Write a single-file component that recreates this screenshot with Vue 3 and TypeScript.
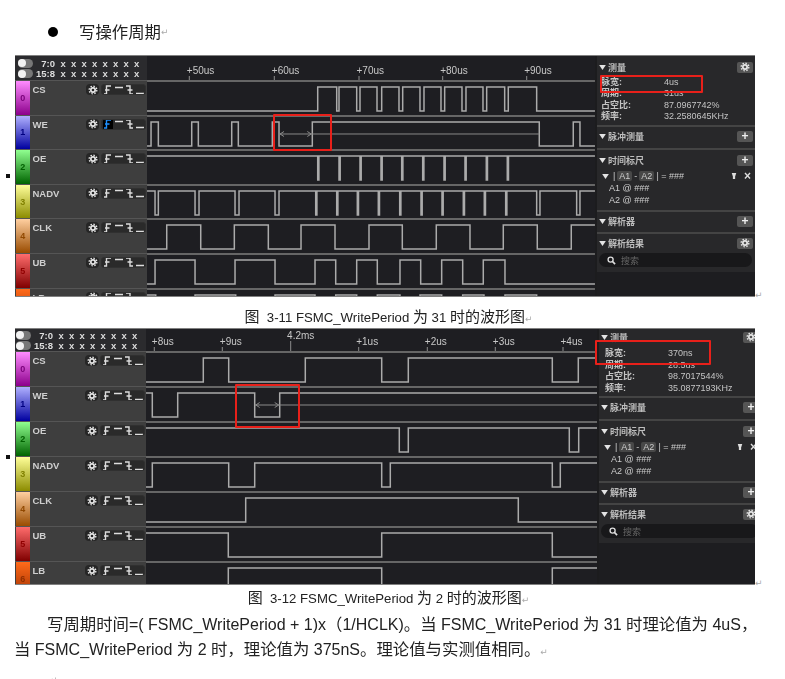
<template>
  <div class="page">
    <svg class="defs" aria-hidden="true">
      <symbol id="gear" viewBox="0 0 12 12">
        <circle cx="6" cy="6" r="2.6" fill="none" stroke="#e8e8e8" stroke-width="2" />
        <circle cx="6" cy="6" r="4.6" fill="none" stroke="#e8e8e8" stroke-width="1.6" stroke-dasharray="1.8 1.8" />
      </symbol>
      <symbol id="pin" viewBox="0 0 8 10">
        <path d="M1 1h6L5.500 5.500V9H2.500V5.500z" fill="#ddd" />
      </symbol>
      <symbol id="tri" viewBox="0 0 8 6">
        <path d="M0 0h8L4 6z" fill="#e4e4e4" />
      </symbol>
    </svg>

    <div class="heading">
      <span class="bullet"></span>
      <span class="heading-text">写操作周期</span><span class="ret">↵</span>
    </div>

    <template v-for="fig in figures" :key="fig.caption">
      <div class="fig-line">
        <div class="gutter"><span class="mark"></span></div>
        <div class="fig" :class="fig.cls">
          <div class="main">
            <div class="head">
              <div class="head-left">
                <div v-for="b in ['7:0', '15:8']" :key="b" class="bits">
                  <span class="toggle"><i></i></span>
                  <span class="bits-name">{{ b }}</span>
                  <span v-for="n in 8" :key="n" class="bit">x</span>
                </div>
              </div>
              <svg class="ruler" :viewBox="`${fig.left} 0 ${fig.width} ${fig.headH}`" :width="fig.width" :height="fig.headH">
                <g v-for="t in fig.ticks" :key="t.label">
                  <line :x1="t.x" :x2="t.x" :y1="t.big ? 13 : fig.headH - 4" :y2="fig.headH" stroke="#8d8d8d" stroke-width="1" />
                  <text :x="t.big ? t.x + 10 : t.x - 2.5" :y="t.big ? 11 : fig.headH - 6" class="tick-text" :text-anchor="t.big ? 'middle' : 'start'">{{ t.label }}</text>
                </g>
              </svg>
            </div>

            <div v-for="(ch, i) in fig.channels" :key="ch.name" class="row">
              <div class="row-left">
                <div class="tab" :class="`tab-${i}`">{{ i }}</div>
                <div class="row-body">
                  <span class="ch-name">{{ ch.name }}</span>
                  <span class="gear-btn"><svg width="10" height="10"><use href="#gear" /></svg></span>
                  <span class="trig">
                    <span class="trig-item" :class="{ active: ch.name === 'WE' && fig.cls === 'a' }">
                      <svg width="9" height="10" viewBox="0 0 9 10"><path d="M1 9h2.500V1H8M2 5h4.500" fill="none" stroke="currentColor" stroke-width="1.400" /></svg>
                    </span>
                    <svg width="10" height="10" viewBox="0 0 10 10"><path d="M1 2.500h8" stroke="#ddd" stroke-width="1.400" /></svg>
                    <svg width="9" height="10" viewBox="0 0 9 10"><path d="M1 1h4v8h3M2.500 5h5" fill="none" stroke="#ddd" stroke-width="1.400" /></svg>
                    <svg width="10" height="10" viewBox="0 0 10 10"><path d="M1 8.500h8" stroke="#ddd" stroke-width="1.400" /></svg>
                  </span>
                </div>
              </div>
              <svg class="wave" :viewBox="`${fig.left} 0 ${fig.width} ${fig.rowH}`" :width="fig.width" :height="fig.rowH">
                <line :x1="fig.left" :x2="fig.left + fig.width" y1="1" y2="1" stroke="#666" stroke-width="2" />
                <path :d="wavePath(ch, fig)" fill="none" stroke="#ababab" stroke-width="1.500" />
                <g v-if="ch.span" stroke="#8a8a8a" stroke-width="1" fill="none">
                  <line :x1="ch.span[0]" :x2="ch.span[2]" y1="19" y2="19" />
                  <path :d="`M${ch.span[0] + 5} 16.500L${ch.span[0] + 1} 19L${ch.span[0] + 5} 21.500`" />
                  <path :d="`M${ch.span[1] - 5} 16.500L${ch.span[1] - 1} 19L${ch.span[1] - 5} 21.500`" />
                </g>
              </svg>
            </div>
          </div>

          <aside class="side">
            <div class="side-inner">
              <section class="sec first">
                <div class="sec-title"><svg width="7" height="5"><use href="#tri" /></svg>测量<span class="btn"><svg width="10" height="10"><use href="#gear" /></svg></span></div>
                <div class="metrics">
                  <div v-for="m in fig.metrics" :key="m[0]" class="metric"><span class="m-label">{{ m[0] }}</span><span>{{ m[1] }}</span></div>
                </div>
              </section>
              <section class="sec s2">
                <div class="sec-title"><svg width="7" height="5"><use href="#tri" /></svg>脉冲测量<span class="btn plus">+</span></div>
              </section>
              <section class="sec s3">
                <div class="sec-title"><svg width="7" height="5"><use href="#tri" /></svg>时间标尺<span class="btn plus">+</span></div>
                <div class="ruler-rows">
                  <div class="rr">
                    <svg width="7" height="5"><use href="#tri" /></svg>
                    <span>|</span><b>A1</b><span>-</span><b>A2</b><span>| = ###</span>
                    <span class="rr-tools"><svg width="6" height="8"><use href="#pin" /></svg><span class="close">×</span></span>
                  </div>
                  <div class="rr sub">A1 @ ###</div>
                  <div class="rr sub">A2 @ ###</div>
                </div>
              </section>
              <section class="sec s4">
                <div class="sec-title"><svg width="7" height="5"><use href="#tri" /></svg>解析器<span class="btn plus">+</span></div>
              </section>
              <section class="sec last">
                <div class="sec-title"><svg width="7" height="5"><use href="#tri" /></svg>解析结果<span class="btn"><svg width="10" height="10"><use href="#gear" /></svg></span></div>
                <div class="search">
                  <svg width="9" height="9" viewBox="0 0 10 10"><circle cx="4" cy="4" r="2.800" fill="none" stroke="#ddd" stroke-width="1.500" /><path d="M6 6l3 3" stroke="#ddd" stroke-width="1.800" /></svg>
                  <span>搜索</span>
                </div>
              </section>
              <div class="result-area"></div>
            </div>
          </aside>

          <div class="red" :class="`red-a-${fig.cls}`"></div>
          <div class="red" :class="`red-b-${fig.cls}`"></div>
        </div>
        <span class="fig-ret ret">↵</span>
      </div>
      <div class="caption" :class="`cap-${fig.cls}`">
        <span v-for="(r, i) in runs(fig.caption)" :key="i" :class="{ cjk: r.cjk }">{{ r.text }}</span><span class="ret">↵</span>
      </div>
    </template>

    <div class="para">
      <div class="line first-line">
        <span v-for="(r, i) in runs(paraOne)" :key="i" :class="{ cjk: r.cjk }">{{ r.text }}</span>
      </div>
      <div class="line">
        <span v-for="(r, i) in runs(paraTwo)" :key="i" :class="{ cjk: r.cjk }">{{ r.text }}</span><span class="ret">↵</span>
      </div>
      <div class="line end-line"><span class="ret">↵</span></div>
    </div>
  </div>
</template>

<script setup lang="ts">
interface Channel {
  name: string
  high: boolean
  edges: number[]
  span?: [number, number, number]
}

interface Fig {
  cls: string
  caption: string
  left: number
  width: number
  headH: number
  rowH: number
  ticks: { x: number; label: string; big?: boolean }[]
  metrics: [string, string][]
  channels: Channel[]
}

const HIGH_Y = 7
const LOW_Y = 31

const paraOne = '写周期时间=( FSMC_WritePeriod + 1)x（1/HCLK)。当 FSMC_WritePeriod 为 31 时理论值为 4uS，'
const paraTwo = '当 FSMC_WritePeriod 为 2 时，理论值为 375nS。理论值与实测值相同。'

const narrow = (xs: number[], w = 1.2) => xs.flatMap((x) => [x, x + w])

// the document sets latin and chinese at different sizes, so split the text by script
const runs = (text: string) =>
  (text.match(/[\u3000-\u9fff\uff00-\uffef]+|[^\u3000-\u9fff\uff00-\uffef]+/g) ?? []).map((t) => ({
    text: t,
    cjk: /[\u3000-\u9fff\uff00-\uffef]/.test(t),
  }))

const figures: Fig[] = [
  {
    cls: 'a',
    caption: '图\u00a0\u00a03-11 FSMC_WritePeriod 为 31 时的波形图',
    left: 147,
    width: 448,
    headH: 25,
    rowH: 34.6,
    ticks: [
      { x: 189.3, label: '+50us' },
      { x: 274.3, label: '+60us' },
      { x: 359, label: '+70us' },
      { x: 442.7, label: '+80us' },
      { x: 526.7, label: '+90us' },
    ],
    metrics: [
      ['脉宽:', '4us'],
      ['周期:', '31us'],
      ['占空比:', '87.0967742%'],
      ['频率:', '32.2580645KHz'],
    ],
    channels: [
      { name: 'CS', high: false, edges: [317.7, 336.7, 339, 356.7, 360, 377, 381.7, 399, 402.7, 420, 424, 441, 444.7, 462, 466, 483, 486.7, 504.7, 508.3, 536.7] },
      { name: 'WE', high: false, edges: [151, 158.3, 191.7, 198.3, 231.7, 238.3, 272.3, 279, 312.3, 539.3, 573.3, 580], span: [279, 312.3, 539.3] },
      { name: 'OE', high: true, edges: narrow([317.7, 339, 360, 381, 401.7, 422.7, 444, 465, 486.3, 507.3]) },
      { name: 'NADV', high: true, edges: [155, 158.3, 195, 199, 235, 239, 275, 279, ...narrow([315.7, 336.7, 357.3, 378.3, 399.7, 421, 442, 463.3, 484.3, 505.7]), 536.7, 540, 576.7, 580] },
      { name: 'CLK', high: false, edges: [166.7, 200.7, 234.3, 268.3, 301, 335, 369, 402.3, 436.3, 470, 503.3, 537.3, 571.3] },
      { name: 'UB', high: false, edges: [155, 195, 235, 275, 315, 335.7, 356.7, 377.3, 400, 420.7, 441.7, 462.7, 483.3, 505] },
      { name: 'LB', high: true, edges: [155.7, 195, 235.7, 275, 315, 335.7, 356.7, 377.3, 400, 420, 441.7, 462.7, 484, 505, 536.7] },
    ],
  },
  {
    cls: 'b',
    caption: '图\u00a0\u00a03-12 FSMC_WritePeriod 为 2 时的波形图',
    left: 146,
    width: 451,
    headH: 23,
    rowH: 35,
    ticks: [
      { x: 154.3, label: '+8us' },
      { x: 222.3, label: '+9us' },
      { x: 290.7, label: '4.2ms', big: true },
      { x: 358.7, label: '+1us' },
      { x: 427.3, label: '+2us' },
      { x: 495.3, label: '+3us' },
      { x: 563, label: '+4us' },
    ],
    metrics: [
      ['脉宽:', '370ns'],
      ['周期:', '28.5us'],
      ['占空比:', '98.7017544%'],
      ['频率:', '35.0877193KHz'],
    ],
    channels: [
      { name: 'CS', high: false, edges: [203.3, 228.7, 305.3, 381.7, 408.3, 552.3, 578.3] },
      { name: 'WE', high: true, edges: [152.3, 177.7, 254.7, 279.7], span: [254.7, 279.7, 597] },
      { name: 'OE', high: true, edges: [399.3, 408.3, 569.3, 578.7] },
      { name: 'NADV', high: false, edges: [152.3, 228.7, 254.7, 381.7, 390.3, 552.3, 560.3] },
      { name: 'CLK', high: false, edges: [245.7, 518.3] },
      { name: 'UB', high: true, edges: [228.3, 381.7, 552.3] },
      { name: 'LB', high: false, edges: [228.3, 381.7, 552.3] },
    ],
  },
]

const wavePath = (ch: Channel, fig: Fig) => {
  let up = ch.high
  let d = `M${fig.left} ${up ? HIGH_Y : LOW_Y}`
  for (const x of ch.edges) {
    up = !up
    d += `H${x}V${up ? HIGH_Y : LOW_Y}`
  }
  return d + `H${fig.left + fig.width}`
}
</script>

<style>
html,
body {
  background: #fff;
}
</style>

<style scoped>
.page {
  width: 785px;
  height: 679px;
  overflow: hidden;
  background: #fff;
  font-family: 'Liberation Sans', 'Noto Sans CJK SC', sans-serif;
  color: #222;
}

.defs {
  position: absolute;
  width: 0;
  height: 0;
}

.heading {
  height: 55px;
  padding: 22px 0 13px 48px;
  box-sizing: border-box;
  display: flex;
  align-items: center;
  font-size: 16.4px;
  line-height: 20px;
  filter: blur(0.3px);
}

.bullet {
  width: 10px;
  height: 10px;
  border-radius: 50%;
  background: #000;
  margin-right: 21px;
}

.ret {
  color: #aaa;
  font-family: 'DejaVu Sans', sans-serif;
  font-size: 9px;
}

.fig-line {
  display: flex;
  align-items: center;
  position: relative;
}

.gutter {
  width: 15px;
  display: flex;
  padding-left: 6px;
  box-sizing: border-box;
}

.mark {
  width: 4px;
  height: 4px;
  background: #111;
}

.fig-ret {
  position: absolute;
  left: 755px;
  bottom: -3px;
}

.fig {
  position: relative;
  display: flex;
  width: 740px;
  overflow: hidden;
  background: #1e1e22;
  color: #ccc;
  filter: blur(0.45px);
}

.fig::after {
  content: '';
  position: absolute;
  inset: 0;
  border-top: 1px solid #808080;
  border-bottom: 1px solid #808080;
}

.fig.a {
  height: 242px;
  --left: 132px;
  --side: 160px;
  --row: 34.6px;
  --head: 25px;
}

.fig.b {
  height: 257px;
  --left: 131px;
  --side: 158px;
  --row: 35px;
  --head: 23px;
}

.main {
  flex: 1;
  min-width: 0;
}

.head {
  display: flex;
  height: var(--head);
}

.head-left {
  width: var(--left);
  flex: none;
  background: #2b2b2e;
  box-sizing: border-box;
  padding-top: 3px;
  font-size: 10px;
  font-weight: 700;
  color: #ddd;
}

.fig.b .head-left {
  padding-top: 2px;
}

.bits {
  display: flex;
  align-items: center;
  height: 10.5px;
}

.toggle {
  width: 15px;
  height: 9px;
  margin: 0 0 0 3px;
  border-radius: 5px;
  background: #777;
  display: flex;
  flex: none;
}

.fig.b .toggle {
  margin-left: 1px;
}

.toggle i {
  width: 8px;
  height: 8px;
  margin-top: 0.5px;
  border-radius: 50%;
  background: #f2f2f2;
}

.bits-name {
  width: 22px;
  flex: none;
  text-align: right;
  font-size: 9.5px;
}

.bit {
  width: 10.5px;
  flex: none;
  text-align: center;
  font-size: 9.5px;
}

.bits-name + .bit {
  margin-left: 3px;
}

.ruler,
.wave {
  display: block;
  flex: none;
  background: #1e1e22;
}

.tick-text {
  font-family: 'Liberation Sans', sans-serif;
  font-size: 10px;
  fill: #c8c8c8;
}

.row {
  display: flex;
  height: var(--row);
}

.row-left {
  width: var(--left);
  flex: none;
  display: flex;
  background: #3e3e3e;
  border-top: 1px solid #555;
  box-sizing: border-box;
}

.tab {
  width: 13.5px;
  margin-left: 1px;
  flex: none;
  display: flex;
  align-items: center;
  justify-content: center;
  font-size: 9px;
  font-weight: 700;
  box-sizing: border-box;
}

.tab-0 { background: linear-gradient(#ff8cff, #8c008c); color: #7a007a; }
.tab-1 { background: linear-gradient(#b0b0ff, #0000a0); color: #000080; }
.tab-2 { background: linear-gradient(#90ff90, #006400); color: #006000; }
.tab-3 { background: linear-gradient(#ffff99, #8c8c00); color: #808000; }
.tab-4 { background: linear-gradient(#ffcfa0, #9a4c00); color: #904800; }
.tab-5 { background: linear-gradient(#ff6c6c, #800000); color: #900000; }
.tab-6 { background: linear-gradient(#ff6a1a, #a03000); color: #903000; }

.row-body {
  flex: 1;
  display: flex;
  align-items: flex-start;
  padding: 3px 1px 0 3px;
  min-width: 0;
}

.ch-name {
  flex: 1;
  font-size: 9.5px;
  font-weight: 700;
  line-height: 12px;
  color: #cfcfcf;
}

.gear-btn {
  width: 13px;
  height: 11px;
  background: #262626;
  border-radius: 4px;
  display: flex;
  align-items: center;
  justify-content: center;
  margin-right: 2px;
}

.trig {
  width: 45px;
  height: 11px;
  background: #2a2a2a;
  border: 1px solid #303030;
  border-radius: 3px;
  box-sizing: border-box;
  display: flex;
  align-items: center;
  justify-content: space-around;
  color: #ddd;
  overflow: hidden;
}

.trig-item {
  display: flex;
  height: 100%;
  width: 10px;
  justify-content: center;
  align-items: center;
}

.trig-item.active {
  background: #000;
  color: #1e90ff;
}

.side {
  width: var(--side);
  flex: none;
  overflow: hidden;
  background: #28282a;
  font-size: 9px;
  color: #bdbdbd;
  border-left: 2px solid #1c1c1e;
  box-sizing: border-box;
}

.side-inner {
  display: flex;
  flex-direction: column;
  height: 100%;
}

.fig.b .side-inner {
  width: 162px;
}

.sec {
  padding: 4px 2px 4px 2px;
  border-bottom: 2px solid #444;
}

.sec-title {
  display: flex;
  align-items: center;
  gap: 2px;
  height: 12px;
  font-weight: 700;
  font-size: 9px;
}

.sec-title svg {
  flex: none;
}

.btn {
  margin-left: auto;
  width: 16px;
  height: 11px;
  background: #555;
  border-radius: 2px;
  display: flex;
  align-items: center;
  justify-content: center;
}

.btn.plus {
  color: #eee;
  font-size: 12px;
  font-weight: 700;
  line-height: 11px;
}

.first {
  padding-top: 6px;
  padding-bottom: 2.5px;
}

.first .metrics {
  margin-top: 3.5px;
}

.fig.b .first {
  padding-top: 3px;
  padding-bottom: 2px;
}

.fig.b .first .metrics {
  margin-top: 5px;
}

.metrics {
  padding-left: 2px;
}

.fig.b .metrics {
  padding-left: 4px;
}

.metric {
  display: flex;
  height: 11.5px;
  line-height: 11.5px;
  color: #c4c4c4;
}

.m-label {
  width: 63px;
  font-weight: 700;
}

.s2 {
  padding-top: 3px;
  padding-bottom: 6px;
}

.ruler-rows {
  margin-top: 4px;
}

.rr {
  display: flex;
  align-items: center;
  gap: 2px;
  height: 12px;
  padding-left: 3px;
  color: #ccc;
  font-size: 9px;
}

.rr b {
  background: #484848;
  padding: 0 2px;
  border-radius: 2px;
  font-weight: 400;
}

.rr svg {
  margin-right: 2px;
}

.rr-tools {
  margin-left: auto;
  margin-right: 2px;
  display: flex;
  align-items: center;
  gap: 5px;
}

.close {
  font-size: 12px;
  font-weight: 700;
  line-height: 10px;
  color: #ddd;
}

.rr.sub {
  padding-left: 10px;
}

.s4 {
  padding-top: 3px;
  padding-bottom: 5px;
}

.last {
  padding: 3px 2px 5px 2px;
  border-bottom: 0;
}

.search {
  margin: 4px 1px 0 0;
  height: 14px;
  border-radius: 7px;
  background: #18181a;
  display: flex;
  align-items: center;
  gap: 5px;
  padding-left: 8px;
  color: #666;
  font-size: 9px;
}

.result-area {
  flex: 1;
  background: #1d1d20;
}

.red {
  position: absolute;
  border: 2px solid #e8201a;
  box-sizing: border-box;
  border-radius: 1px;
  z-index: 1;
}

.red-a-a { left: 258px; top: 59px; width: 59px; height: 37px; }
.red-b-a { left: 585px; top: 20px; width: 103px; height: 18px; }
.red-a-b { left: 220px; top: 56px; width: 65px; height: 44px; }
.red-b-b { left: 580px; top: 12px; width: 116px; height: 25px; }

.caption {
  text-align: center;
  font-size: 13.2px;
  line-height: 16px;
  white-space: nowrap;
  box-sizing: border-box;
  padding-right: 8px;
  filter: blur(0.25px);
}

.caption .cjk {
  font-size: 15px;
}

.cap-a {
  height: 31px;
  padding-top: 12px;
}

.cap-b {
  height: 26px;
  padding-top: 5px;
}

.para {
  padding-top: 1px;
  font-size: 16px;
  line-height: 25px;
  filter: blur(0.25px);
}

.para .cjk {
  font-size: 16.4px;
}

.line {
  padding-left: 14px;
  white-space: nowrap;
  height: 25px;
}

.first-line {
  padding-left: 47px;
}

.end-line {
  padding-left: 50px;
  line-height: 32px;
}
</style>
